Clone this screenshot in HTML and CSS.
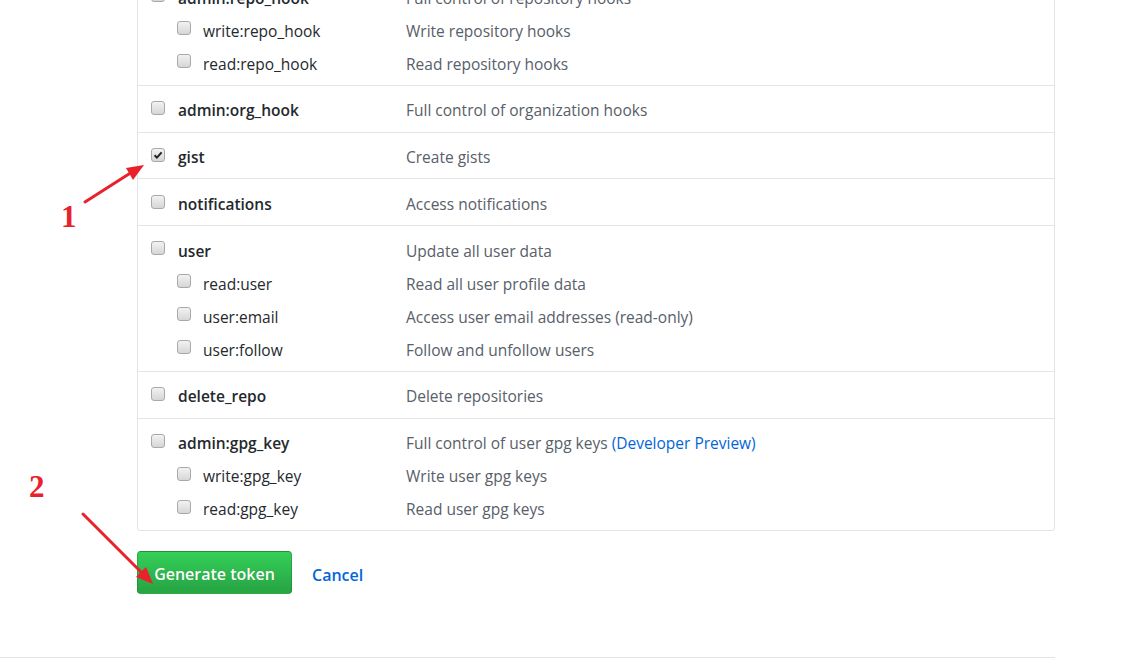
FILE: index.html
```html
<!DOCTYPE html>
<html>
<head>
<meta charset="utf-8">
<link rel="stylesheet" href="styles.css">
</head>
<body>
<div class="page">
  <div class="scopes">
    <div class="scope">
      <div class="line main"><span class="cb"></span><span class="name">admin:repo_hook</span><span class="desc">Full control of repository hooks</span></div>
      <div class="line sub"><span class="cb"></span><span class="name">write:repo_hook</span><span class="desc">Write repository hooks</span></div>
      <div class="line sub"><span class="cb"></span><span class="name">read:repo_hook</span><span class="desc">Read repository hooks</span></div>
    </div>
    <div class="scope">
      <div class="line main"><span class="cb"></span><span class="name">admin:org_hook</span><span class="desc">Full control of organization hooks</span></div>
    </div>
    <div class="scope">
      <div class="line main"><span class="cb checked"><svg viewBox="0 0 14 14" width="14" height="14"><path d="M3.6 7.2 L5.9 9.6 L10.6 4.3" fill="none" stroke="#222" stroke-width="2"/></svg></span><span class="name">gist</span><span class="desc">Create gists</span></div>
    </div>
    <div class="scope">
      <div class="line main"><span class="cb"></span><span class="name">notifications</span><span class="desc">Access notifications</span></div>
    </div>
    <div class="scope">
      <div class="line main"><span class="cb"></span><span class="name">user</span><span class="desc">Update all user data</span></div>
      <div class="line sub"><span class="cb"></span><span class="name">read:user</span><span class="desc">Read all user profile data</span></div>
      <div class="line sub"><span class="cb"></span><span class="name">user:email</span><span class="desc">Access user email addresses (read-only)</span></div>
      <div class="line sub"><span class="cb"></span><span class="name">user:follow</span><span class="desc">Follow and unfollow users</span></div>
    </div>
    <div class="scope">
      <div class="line main"><span class="cb"></span><span class="name">delete_repo</span><span class="desc">Delete repositories</span></div>
    </div>
    <div class="scope">
      <div class="line main"><span class="cb"></span><span class="name">admin:gpg_key</span><span class="desc">Full control of user gpg keys <a class="link">(Developer Preview)</a></span></div>
      <div class="line sub"><span class="cb"></span><span class="name">write:gpg_key</span><span class="desc">Write user gpg keys</span></div>
      <div class="line sub"><span class="cb"></span><span class="name">read:gpg_key</span><span class="desc">Read user gpg keys</span></div>
    </div>
  </div>
  <div class="actions">
    <button class="btn">Generate token</button>
    <a class="cancel">Cancel</a>
  </div>
  <div class="footer"></div>

  <span class="num num1">1</span>
  <span class="num num2">2</span>
  <svg class="arrows" width="1144" height="670" viewBox="0 0 1144 670">
    <line x1="85" y1="202" x2="132" y2="172" stroke="#e8212b" stroke-width="3" stroke-linecap="round"/>
    <polygon points="144,165 126,168 133,180" fill="#e8212b"/>
    <line x1="83" y1="514" x2="143" y2="574" stroke="#e8212b" stroke-width="3" stroke-linecap="round"/>
    <polygon points="153,584 136,577 146,567" fill="#e8212b"/>
  </svg>
</div>
</body>
</html>
```
FILE: styles.css
```css
html, body {
  margin: 0;
  padding: 0;
  background: #fff;
}
body {
  font-family: "Open Sans", "Noto Sans", "Liberation Sans", sans-serif;
  font-size: 15.5px;
  color: #24292e;
  overflow: hidden;
}
.page {
  position: relative;
  display: flow-root;
  width: 1144px;
  height: 670px;
}
.scopes {
  margin: -28px 0 0 137px;
  width: 916px;
  border: 1px solid #e1e4e8;
  border-radius: 0 0 3px 3px;
}
.scope {
  border-top: 1px solid #e1e4e8;
  padding: 13.5px 0 9.75px 13px;
}
.scope:first-child {
  border-top: none;
}
.line {
  display: grid;
  grid-template-columns: 14px 215px 1fr;
  column-gap: 13px;
  align-items: center;
  height: 22.5px;
  line-height: 22.5px;
}
.line.sub {
  margin-top: 10.5px;
  padding-left: 26px;
  grid-template-columns: 14px 191px 1fr;
  column-gap: 12px;
}
.cb {
  width: 14px;
  height: 14px;
  border: 1px solid #a9a9a9;
  border-radius: 3px;
  background: linear-gradient(#f2f2f2, #d6d6d6);
  box-sizing: border-box;
  margin-top: -5px;
  position: relative;
  display: block;
}
.cb svg {
  position: absolute;
  left: -1px;
  top: -1px;
}
.name {
  color: #24292e;
  white-space: nowrap;
}
.main .name {
  font-weight: 600;
}
.desc {
  color: #586069;
  white-space: nowrap;
}
.link {
  color: #0366d6;
}
.actions {
  display: flex;
  align-items: center;
  margin: 20px 0 0 137px;
  gap: 20px;
}
.btn {
  font-family: inherit;
  font-size: 16px;
  font-weight: 600;
  color: #fff;
  height: 43px;
  width: 155px;
  border: 1px solid rgba(27, 31, 35, 0.2);
  border-radius: 4px;
  background: linear-gradient(#34d058, #28a745 90%);
  padding: 3px 0 0;
  text-shadow: 0 0 1px rgba(0, 0, 0, 0.15);
}
.cancel {
  color: #0366d6;
  font-size: 16px;
  font-weight: 600;
  margin-top: 4px;
}
.footer {
  margin-top: 63px;
  width: 1055px;
  height: 1px;
  background: #e1e4e8;
}
.num {
  position: absolute;
  font-family: "Liberation Serif", "DejaVu Serif", serif;
  font-weight: bold;
  font-size: 31px;
  line-height: 1;
  color: #e8212b;
}
.num1 {
  left: 61px;
  top: 201px;
}
.num2 {
  left: 29px;
  top: 471px;
}
.arrows {
  position: absolute;
  left: 0;
  top: 0;
  pointer-events: none;
}
```
